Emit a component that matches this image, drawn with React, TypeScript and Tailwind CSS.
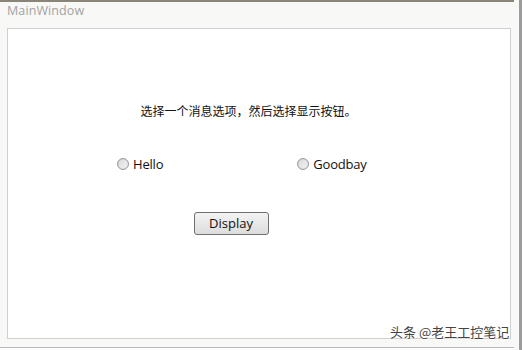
import React from "react";

function Radio() {
  return (
    <span className="inline-block w-[12px] h-[12px] rounded-full border border-[#9a9a9a] bg-gradient-to-br from-[#d8d8d8] to-[#f4f4f4] shadow-[inset_0_0_1px_#bbb]" />
  );
}

export default function App() {
  return (
    <div
      className="w-[522px] h-[350px] bg-[#f8f8f7] flex overflow-hidden relative"
      style={{ fontFamily: '"Open Sans", "Noto Sans", "Noto Sans CJK SC", sans-serif' }}
    >
      <div className="flex-1 flex flex-col border-t-2 border-[#8b8478]">
        <div className="h-[26px] pl-[7px] flex items-start">
          <span className="text-[12.5px] leading-[18px] text-[#a3a3a3] tracking-[0.1px]">MainWindow</span>
        </div>
        <div className="ml-[7px] w-[504px] h-[311px] bg-white border border-[#cfcfcf] flex flex-col items-center">
          <div
            className="mt-[74px] ml-[-21px] text-[12px] leading-[16px] text-[#111]"
            style={{ fontFamily: '"Noto Sans CJK SC", sans-serif' }}
          >
            选择一个消息选项，然后选择显示按钮。
          </div>
          <div className="mt-[36px] w-full flex text-[13px] leading-[18px] text-[#111] tracking-[-0.2px]">
            <div className="ml-[109px] flex items-center gap-[4px]">
              <Radio />
              <span>Hello</span>
            </div>
            <div className="ml-[134px] flex items-center gap-[4px]">
              <Radio />
              <span>Goodbay</span>
            </div>
          </div>
          <div className="mt-[37px] ml-[-56px]">
            <button className="w-[75px] h-[23px] rounded-[3px] border border-[#707070] bg-gradient-to-b from-[#f3f3f3] to-[#dddddd] text-[13px] leading-[20px] text-[#111]">
              Display
            </button>
          </div>
        </div>
        <div className="mt-[8px] border-t border-[#b8b8b8] flex-1 bg-white" />
      </div>
      <div className="w-[8px] flex">
        <div className="w-[5px]" />
        <div className="w-[3px] bg-[#9c9c9c]" />
      </div>
      <div
        className="absolute left-[390px] top-[323px] text-[13px] leading-[18px] text-[#444]"
        style={{
          fontFamily: '"Noto Sans CJK SC", sans-serif',
          textShadow: "0 0 2px #fff, 0 0 2px #fff",
        }}
      >
        头条 @老王工控笔记
      </div>
    </div>
  );
}
